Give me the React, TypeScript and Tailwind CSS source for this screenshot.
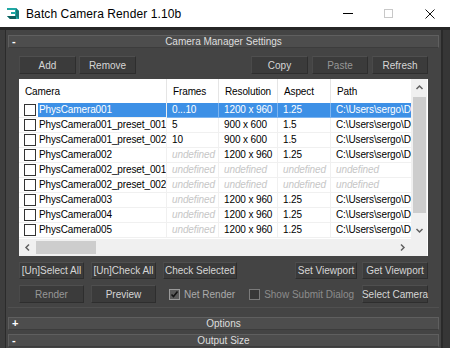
import React from "react";

type Row = {
  name: string;
  frames: string;
  res: string;
  aspect: string;
  path: string;
  selected?: boolean;
};

const U = "undefined";
const P = "C:\\Users\\sergo\\Documents";

const rows: Row[] = [
  { name: "PhysCamera001", frames: "0...10", res: "1200 x 960", aspect: "1.25", path: P, selected: true },
  { name: "PhysCamera001_preset_001", frames: "5", res: "900 x 600", aspect: "1.5", path: P },
  { name: "PhysCamera001_preset_002", frames: "10", res: "900 x 600", aspect: "1.5", path: P },
  { name: "PhysCamera002", frames: U, res: "1200 x 960", aspect: "1.25", path: P },
  { name: "PhysCamera002_preset_001", frames: U, res: U, aspect: U, path: U },
  { name: "PhysCamera002_preset_002", frames: U, res: U, aspect: U, path: U },
  { name: "PhysCamera003", frames: U, res: "1200 x 960", aspect: "1.25", path: P },
  { name: "PhysCamera004", frames: U, res: "1200 x 960", aspect: "1.25", path: P },
  { name: "PhysCamera005", frames: U, res: "1200 x 960", aspect: "1.25", path: P },
];

function MaxIcon() {
  return (
    <svg width="15" height="13" viewBox="0 0 15 13">
      <polygon points="1,1 10,1 13,4 13,12 4,12 1,9 5,9 9,9 9,7 5,7 5,5 9,5 9,3 1,3" fill="#1fa8a4" />
      <polygon points="10,1 13,4 13,12 10,9" fill="#157a78" />
      <polygon points="1,9 4,12 10,12 10,9" fill="#0f5f5d" />
    </svg>
  );
}

function Btn({ label, w, dim }: { label: string; w: string; dim?: boolean }) {
  return (
    <div
      className={`${w} h-full flex items-center justify-center bg-[#3b3b3b] border border-[#2e2e2e] border-t-[#4f4f4f] border-l-[#4a4a4a] whitespace-nowrap ${
        dim ? "text-[#979797]" : "text-[#d6d6d6]"
      }`}
    >
      {label}
    </div>
  );
}

function Check({ checked }: { checked?: boolean }) {
  return (
    <div
      className={`w-[11px] h-[11px] border flex items-center justify-center ${
        checked ? "border-[#9a9a9a] bg-[#5a5a5a]" : "border-[#7a7a7a] bg-[#383838]"
      }`}
    >
      {checked && (
        <svg width="9" height="9" viewBox="0 0 9 9">
          <path d="M1.5 4.5 L3.5 6.5 L7.5 1.5" stroke="#141414" strokeWidth="1.6" fill="none" />
        </svg>
      )}
    </div>
  );
}

function RolloutHeader({ sign, title }: { sign: string; title: string }) {
  return (
    <div className="h-[13px] grid grid-cols-[20px_1fr_20px] items-center bg-[#4d4d4d] border border-[#5f5f5f] border-b-[#3c3c3c] text-[#dedede] leading-none shrink-0">
      <span className="pl-[3px] font-bold text-[11px] text-white">{sign}</span>
      <span className="text-center">{title}</span>
      <span />
    </div>
  );
}

function Cell({ w, text, selected, last }: { w: string; text: string; selected?: boolean; last?: boolean }) {
  const undef = text === U;
  return (
    <div
      className={`${w} shrink-0 h-full overflow-hidden whitespace-nowrap pl-[5px] leading-[14px] border-b ${
        last ? "" : "border-r"
      } ${
        selected
          ? "bg-[#3d90e6] text-white border-[#7db4ef]"
          : undef
          ? "italic text-[#c6c6c6] border-[#f0f0f0]"
          : "text-black border-[#f0f0f0]"
      }`}
    >
      {text}
    </div>
  );
}

function Chevron({ dir }: { dir: "up" | "down" | "left" | "right" }) {
  const d = {
    up: "M1.5 6 L4.5 3 L7.5 6",
    down: "M1.5 3 L4.5 6 L7.5 3",
    left: "M6 1.5 L3 4.5 L6 7.5",
    right: "M3 1.5 L6 4.5 L3 7.5",
  }[dir];
  return (
    <svg width="9" height="9" viewBox="0 0 9 9">
      <path d={d} stroke="#606060" strokeWidth="1.5" fill="none" />
    </svg>
  );
}

function CameraList() {
  return (
    <div className="h-[177px] bg-white flex flex-col shrink-0 tracking-[-0.12px]">
      <div className="flex-1 min-h-0 flex">
        <div className="w-[392px] flex flex-col overflow-hidden">
          <div className="h-[24px] flex shrink-0 text-black">
            {[
              ["w-[148px]", "Camera"],
              ["w-[52px]", "Frames"],
              ["w-[59px]", "Resolution"],
              ["w-[53px]", "Aspect"],
              ["w-[80px]", "Path"],
            ].map(([w, t], i) => (
              <div
                key={t}
                className={`${w} shrink-0 flex items-center pl-[6px] ${i < 4 ? "border-r border-[#e5e5e5]" : ""}`}
              >
                {t}
              </div>
            ))}
          </div>
          {rows.map((r) => (
            <div key={r.name} className="h-[15px] flex shrink-0">
              <div className="w-[148px] shrink-0 h-full flex items-center pl-[5px] border-r border-b border-[#f0f0f0]">
                <div className="w-[12px] h-[12px] border border-[#333333] bg-white shrink-0" />
                <div
                  className={`ml-[2px] pl-[1px] flex-1 h-[14px] leading-[14px] whitespace-nowrap overflow-hidden ${
                    r.selected ? "bg-[#3d90e6] text-white" : "text-black"
                  }`}
                >
                  {r.name}
                </div>
              </div>
              <Cell w="w-[52px]" text={r.frames} selected={r.selected} />
              <Cell w="w-[59px]" text={r.res} selected={r.selected} />
              <Cell w="w-[53px]" text={r.aspect} selected={r.selected} />
              <Cell w="w-[80px]" text={r.path} selected={r.selected} last />
            </div>
          ))}
        </div>
        <div className="w-[16px] bg-[#f0f0f0] flex flex-col items-center">
          <div className="h-[17px] flex items-center justify-center">
            <Chevron dir="up" />
          </div>
          <div className="w-[13px] h-[116px] bg-[#cdcdcd] mt-[1px]" />
          <div className="flex-1" />
          <div className="h-[17px] flex items-center justify-center">
            <Chevron dir="down" />
          </div>
        </div>
      </div>
      <div className="h-[17px] flex shrink-0">
        <div className="w-[392px] bg-[#f0f0f0] flex items-center">
          <div className="w-[17px] flex justify-center">
            <Chevron dir="left" />
          </div>
          <div className="w-[60px] h-[13px] bg-[#cdcdcd]" />
          <div className="flex-1" />
          <div className="w-[17px] flex justify-center">
            <Chevron dir="right" />
          </div>
        </div>
        <div className="w-[16px] bg-[#f0f0f0]" />
      </div>
    </div>
  );
}

export default function App() {
  return (
    <div className="w-[450px] h-[348px] overflow-hidden flex flex-col bg-[#444444] font-['Liberation_Sans',Arial,sans-serif] text-[10px]">
      {/* Title bar */}
      <div className="h-[27px] bg-white flex items-center shrink-0">
        <div className="ml-[6px] flex items-center">
          <MaxIcon />
        </div>
        <span className="ml-[5px] text-[12px] tracking-[0.1px] text-black">Batch Camera Render 1.10b</span>
        <div className="ml-auto flex h-full">
          <div className="w-[41px] flex items-center justify-center">
            <div className="w-[10px] h-[1px] bg-black" />
          </div>
          <div className="w-[41px] flex items-center justify-center">
            <div className="w-[9px] h-[9px] border border-[#c8c8c8]" />
          </div>
          <div className="w-[41px] flex items-center justify-center">
            <svg width="10" height="10" viewBox="0 0 10 10">
              <path d="M0.5 0.5 L9.5 9.5 M9.5 0.5 L0.5 9.5" stroke="#111" strokeWidth="1" />
            </svg>
          </div>
        </div>
      </div>

      {/* Body */}
      <div className="flex-1 flex border-t-[3px] border-[#262626] min-h-0">
        <div className="w-[6px] bg-[#3d3d3d] border-r border-[#2b2b2b] shrink-0" />
        <div className="flex-1 flex flex-col px-[2px] pt-[5px] min-w-0">
          {/* Camera Manager Settings */}
          <div className="flex flex-col shrink-0 border-b border-[#505050]">
            <RolloutHeader sign="-" title="Camera Manager Settings" />
            <div className="flex flex-col px-[11px] pt-[8px] pb-[4px]">
              <div className="h-[18px] flex">
                <div className="flex gap-[3px] h-full">
                  <Btn w="w-[57px]" label="Add" />
                  <Btn w="w-[57px]" label="Remove" />
                </div>
                <div className="ml-auto flex gap-[4px] h-full">
                  <Btn w="w-[57px]" label="Copy" />
                  <Btn w="w-[56px]" label="Paste" dim />
                  <Btn w="w-[56px]" label="Refresh" />
                </div>
              </div>
              <div className="mt-[5px]">
                <CameraList />
              </div>
              <div className="h-[17px] flex mt-[6px]">
                <div className="flex gap-[7px] h-full">
                  <Btn w="w-[65px]" label="[Un]Select All" />
                  <Btn w="w-[65px]" label="[Un]Check All" />
                  <Btn w="w-[74px]" label="Check Selected" />
                </div>
                <div className="ml-auto flex gap-[5px] h-full">
                  <Btn w="w-[62px]" label="Set Viewport" />
                  <Btn w="w-[66px]" label="Get Viewport" />
                </div>
              </div>
              <div className="h-[18px] flex mt-[6px] items-center">
                <div className="flex gap-[7px] h-full">
                  <Btn w="w-[65px]" label="Render" dim />
                  <Btn w="w-[65px]" label="Preview" />
                </div>
                <div className="ml-[13px] flex items-center gap-[4px] text-[#ababab]">
                  <Check checked />
                  <span>Net Render</span>
                </div>
                <div className="ml-[14px] flex items-center gap-[4px] text-[#8c8c8c]">
                  <Check />
                  <span>Show Submit Dialog</span>
                </div>
                <div className="ml-auto h-full flex">
                  <Btn w="w-[66px]" label="Select Camera" />
                </div>
              </div>
            </div>
          </div>

          <div className="mt-[9px] flex flex-col gap-[4px]">
            <RolloutHeader sign="+" title="Options" />
            <RolloutHeader sign="-" title="Output Size" />
          </div>
        </div>
        <div className="w-[9px] bg-[#363636] border-l-[2px] border-[#2a2a2a] shrink-0" />
      </div>
    </div>
  );
}
